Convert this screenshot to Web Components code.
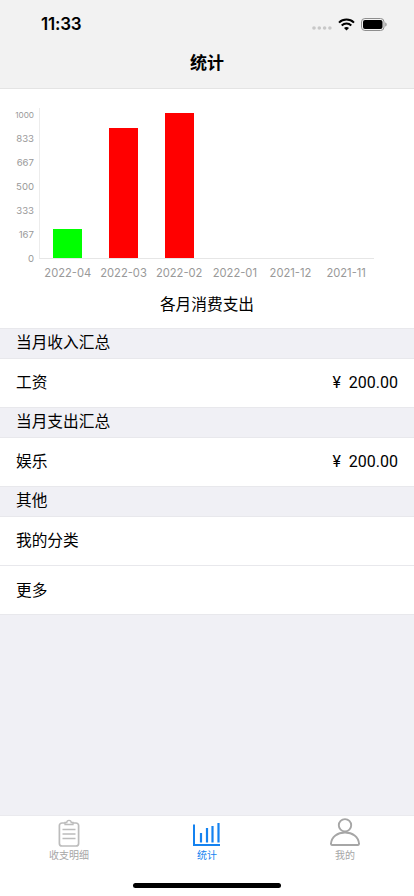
<!DOCTYPE html>
<html lang="zh">
<head>
<meta charset="utf-8">
<title>统计</title>
<style>
  html, body { margin: 0; height: 100%; }
  body {
    width: 414px; height: 896px; overflow: hidden;
    display: flex; flex-direction: column;
    background: #f0f0f5; color: #000;
    font-family: Inter, "Noto Sans CJK SC", sans-serif;
  }
  stat-list { flex: 1; }
</style>
</head>
<body>
<app-header title="统计" time="11:33"></app-header>
<bar-chart caption="各月消费支出"></bar-chart>
<stat-list>
  <list-section>当月收入汇总</list-section>
  <list-row value="200.00">工资</list-row>
  <list-section>当月支出汇总</list-section>
  <list-row value="200.00">娱乐</list-row>
  <list-section>其他</list-section>
  <list-row>我的分类</list-row>
  <list-row>更多</list-row>
</stat-list>
<tab-bar></tab-bar>

<script>
class AppHeader extends HTMLElement {
  connectedCallback() {
    this.attachShadow({ mode: 'open' });
    this.shadowRoot.innerHTML = `
      <style>
        :host { display: block; flex: none; background: #f2f2f2; border-bottom: 1px solid #e4e4e4; }
        .status { height: 44px; display: flex; align-items: center; padding: 4px 27px 0 41px; box-sizing: border-box; }
        .time { font-size: 17px; font-weight: 600; letter-spacing: -0.2px; flex: 1; }
        .icons { display: flex; align-items: center; gap: 6px; }
        .dots { margin-top: 8px; }
        .nav { height: 44px; box-sizing: border-box; padding-bottom: 10px; display: flex; align-items: center; justify-content: center; font-size: 17px; font-weight: 600; }
      </style>
      <div class="status">
        <div class="time">${this.getAttribute('time')}</div>
        <div class="icons">
          <svg class="dots" width="20" height="4" viewBox="0 0 20 4" fill="#c8c8c8"><circle cx="2" cy="2" r="1.8"/><circle cx="7.3" cy="2" r="1.8"/><circle cx="12.6" cy="2" r="1.8"/><circle cx="17.9" cy="2" r="1.8"/></svg>
          <svg width="17" height="13" viewBox="0 0 17 13"><path d="M1 4.6a10.8 10.8 0 0 1 15 0" fill="none" stroke="#000" stroke-width="2"/><path d="M3.7 7.4a7 7 0 0 1 9.6 0" fill="none" stroke="#000" stroke-width="2"/><path d="M6 10a3.4 3.4 0 0 1 5 0l-2.5 2.6z" fill="#000"/></svg>
          <svg width="26" height="13" viewBox="0 0 26 13"><rect x=".5" y=".5" width="22.5" height="12" rx="3.4" fill="none" stroke="#8e8e8e"/><rect x="2" y="2" width="19.5" height="9" rx="2" fill="#000"/><path d="M24.2 4.5c1 .3 1.500 1 1.500 2s-.5 1.700-1.500 2z" fill="#9a9a9a"/></svg>
        </div>
      </div>
      <div class="nav">${this.getAttribute('title')}</div>`;
  }
}

class BarChart extends HTMLElement {
  connectedCallback() {
    const ticks = ['1000', '833', '667', '500', '333', '167', '0'];
    const data = [
      ['2022-04', 200, '#00ff00'], ['2022-03', 900, '#ff0000'], ['2022-02', 1000, '#ff0000'],
      ['2022-01', 0], ['2021-12', 0], ['2021-11', 0]
    ];
    this.attachShadow({ mode: 'open' });
    this.shadowRoot.innerHTML = `
      <style>
        :host { display: block; flex: none; background: #fff; height: 238.5px; box-sizing: border-box; padding: 19px 40px 0 0; }
        .chart { display: grid; grid-template-columns: 40px 1fr; grid-template-rows: 151px 26px; }
        .y { display: flex; flex-direction: column; justify-content: space-between; align-items: flex-end;
             padding: 0 6px 0 0; margin-top: .5px; font-size: 9.6px; line-height: 12px; color: #999; box-sizing: border-box; height: 157px; }
        .y span:first-child { font-size: 8.2px; }
        .plot { display: grid; grid-template-columns: repeat(6, 1fr); align-items: end;
                border-left: 1px solid #ececec; border-bottom: 1px solid #e6e6e6; margin-left: -1px; }
        .slot { display: flex; justify-content: center; }
        .bar { width: 29px; }
        .x { grid-column: 2; display: grid; grid-template-columns: repeat(6, 1fr); align-items: center;
             font-size: 11.2px; color: #999; text-align: center; padding-top: 2px; height: 26px; box-sizing: border-box; }
        .caption { font-size: 15.7px; text-align: center; margin: 8px -40px 0 0; line-height: 24px; }
      </style>
      <div class="chart">
        <div class="y">${ticks.map(t => `<span>${t}</span>`).join('')}</div>
        <div class="plot">${data.map(d => `<div class="slot"><div class="bar" style="height:${(d[1] * 0.145).toFixed(1)}px;background:${d[2] || 'none'}"></div></div>`).join('')}</div>
        <div class="x">${data.map(d => `<span>${d[0]}</span>`).join('')}</div>
      </div>
      <div class="caption">${this.getAttribute('caption')}</div>`;
  }
}

class ListSection extends HTMLElement {
  connectedCallback() {
    this.attachShadow({ mode: 'open' });
    this.shadowRoot.innerHTML = `
      <style>
        :host { display: flex; align-items: center; height: 30px; box-sizing: border-box; padding: 0 16px 4px;
                background: #f0f0f5; border-top: 1px solid #e8e8ec; font-size: 15.7px; }
      </style>
      <slot></slot>`;
  }
}

class ListRow extends HTMLElement {
  connectedCallback() {
    const value = this.getAttribute('value');
    this.attachShadow({ mode: 'open' });
    this.shadowRoot.innerHTML = `
      <style>
        :host { display: flex; align-items: center; justify-content: space-between; height: 49px; box-sizing: border-box;
                padding: 0 16px 3px; background: #fff; border-top: 1px solid #e8e8ec; font-size: 15.7px; }
        :host(:last-child) { height: 50px; padding-bottom: 1px; border-bottom: 1px solid #e8e8ec; }
        .value { font: 16px Roboto, sans-serif; display: flex; gap: 8px; align-items: baseline; margin-top: 2px; }
      </style>
      <slot></slot>
      ${value ? `<span class="value"><span>¥</span>${value}</span>` : ''}`;
  }
}

class TabBar extends HTMLElement {
  connectedCallback() {
    const gray = '#a6a6a6', blue = '#1482f0';
    const tabs = [
      ['收支明细', gray, `<svg width="22" height="28" viewBox="0 0 22 28" fill="none" stroke="#bcbcbc"><path d="M7 4H4a2.600 2.600 0 0 0-2.600 2.600v17.800A2.600 2.600 0 0 0 4 27h14a2.600 2.600 0 0 0 2.600-2.600V6.600A2.600 2.600 0 0 0 18 4h-3" stroke-width="1.700"/><path d="M7 5.500V3.500h1.800a2.200 2.200 0 0 1 4.400 0H15v2z" stroke-width="1.300"/><path d="M4.500 10.500h13M4.500 15h13M4.500 19.500h13" stroke-width="1.300"/></svg>`],
      ['统计', blue, `<svg width="28" height="24" viewBox="0 0 28 24" fill="none" stroke="${blue}"><path d="M1 1.500V22H27" stroke-width="2"/><path d="M8 19.500V10M14 19.500V5M19.500 19.500V3M25.500 19.500V0" stroke-width="2.200"/></svg>`],
      ['我的', gray, `<svg width="30" height="29" viewBox="0 0 30 29" fill="none" stroke="${gray}"><circle cx="15" cy="7.300" r="6.200" stroke-width="1.900"/><path d="M2 27a1.200 1.200 0 0 1-1-1.300C1.500 18.500 7.500 14.500 15 14.500s13.500 4 14 11.200a1.200 1.200 0 0 1-1 1.300z" stroke-width="1.900"/></svg>`]
    ];
    this.attachShadow({ mode: 'open' });
    this.shadowRoot.innerHTML = `
      <style>
        :host { display: block; flex: none; height: 81px; background: #fff; border-top: 1px solid #eaeaee; box-sizing: border-box; position: relative; }
        .tabs { display: grid; grid-template-columns: repeat(3, 1fr); }
        .tab { display: flex; flex-direction: column; align-items: center; height: 46px; justify-content: flex-end; font-size: 10px; line-height: 14px; }
        .tab svg { display: block; margin-bottom: 1px; }
        .home { position: absolute; left: 133px; bottom: 8px; width: 148px; height: 5px; border-radius: 3px; background: #000; }
      </style>
      <div class="tabs">
        ${tabs.map(t => `<div class="tab" style="color:${t[1]}">${t[2]}<span>${t[0]}</span></div>`).join('')}
      </div>
      <div class="home"></div>`;
  }
}

customElements.define('app-header', AppHeader);
customElements.define('bar-chart', BarChart);
customElements.define('list-section', ListSection);
customElements.define('list-row', ListRow);
customElements.define('tab-bar', TabBar);
</script>
</body>
</html>
